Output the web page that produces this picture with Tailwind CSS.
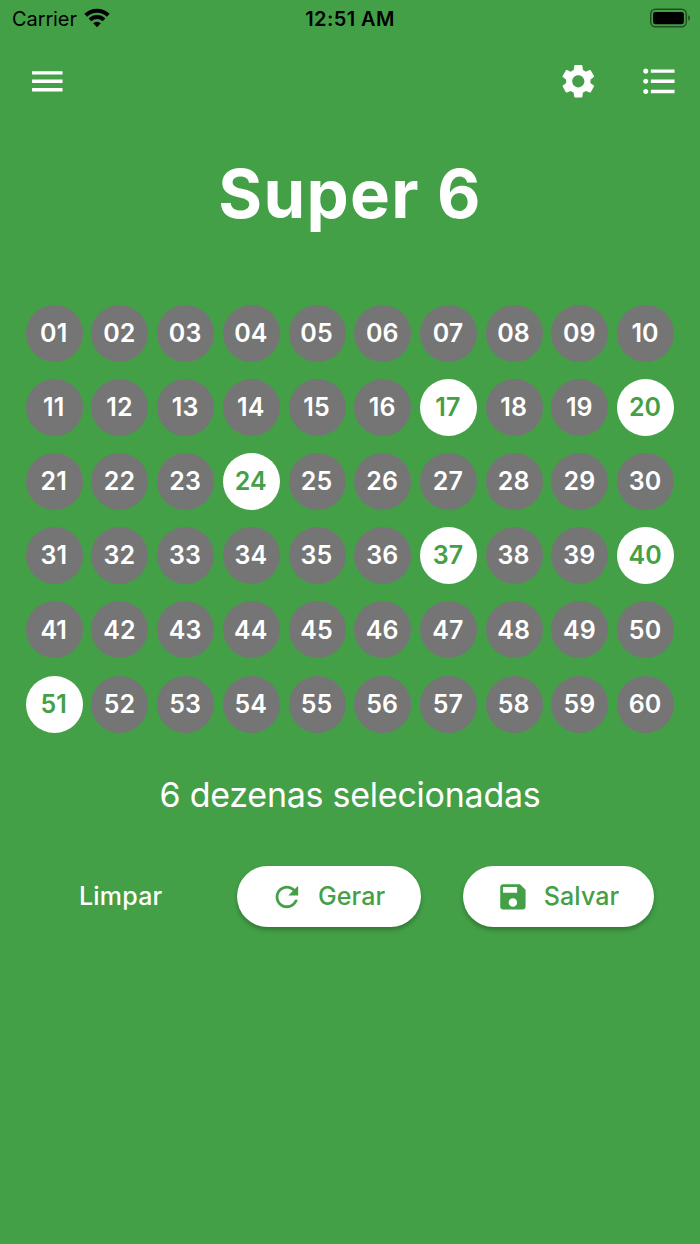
<!DOCTYPE html>
<html lang="pt-BR">
  <head>
    <meta charset="UTF-8" />
    <meta name="viewport" content="width=device-width, initial-scale=1.0" />
    <title>Super 6</title>
    <script src="https://cdn.jsdelivr.net/npm/@tailwindcss/browser@4"></script>
  </head>
  <body
    class="bg-[#43a047] font-['Inter','Roboto',sans-serif] text-white w-[700px] h-[1244px] overflow-hidden"
  >
    <!-- Status bar -->
    <div
      class="grid grid-cols-3 items-center h-[34px] pl-[12px] pr-[9px] text-black"
    >
      <div class="flex items-center gap-[7px]">
        <span id="carrier" class="text-[20px] leading-[34px] tracking-[-0.1px] pt-[2px]">Carrier</span>
        <svg class="w-[26px] h-[20px] mb-[1px]" viewBox="0 0 26 20" fill="none">
          <path d="M1.7 7.2a16.3 16.3 0 0 1 22.6 0" stroke="currentColor" stroke-width="4" />
          <path d="M6 11.9a10 10 0 0 1 14 0" stroke="currentColor" stroke-width="3.9" />
          <path d="M13 19.2l-3.8-3.9a5.3 5.3 0 0 1 7.6 0z" fill="currentColor" />
        </svg>
      </div>
      <div class="text-center pr-[3px] pt-[2px]">
        <span id="time" class="text-[20px] leading-[34px] font-semibold tracking-[0.4px]">12:51 AM</span>
      </div>
      <div class="flex justify-end">
        <svg class="w-[42px] h-[20px] mb-[1px]" viewBox="0 0 42 20">
          <rect x="1.7" y="1.2" width="35.6" height="17.6" rx="4.8" fill="none" stroke="#000" stroke-opacity="0.5" stroke-width="1.5" />
          <rect x="4.1" y="3.9" width="30.8" height="12.4" rx="2.2" fill="#000" />
          <path d="M39.2 7.3c2.4.9 2.4 4.5 0 5.4z" fill="#000" fill-opacity="0.5" />
        </svg>
      </div>
    </div>

    <!-- App bar -->
    <header class="flex items-center h-[95px] pl-[27px] pr-[20.5px]">
      <svg class="w-[40.6px] h-[40.6px]" viewBox="0 0 24 24" fill="currentColor">
        <path d="M3 18h18v-2H3v2zm0-5h18v-2H3v2zm0-7v2h18V6H3z" />
      </svg>
      <div class="flex gap-[40.6px] ml-auto">
        <svg class="w-[40.6px] h-[40.6px]" viewBox="0 0 24 24" fill="currentColor">
          <path
            d="M19.14 12.94c.04-.3.06-.61.06-.94 0-.32-.02-.64-.07-.94l2.03-1.58c.18-.14.23-.41.12-.61l-1.92-3.32c-.12-.22-.37-.29-.59-.22l-2.39.96c-.5-.38-1.03-.7-1.62-.94l-.36-2.54c-.04-.24-.24-.41-.48-.41h-3.84c-.24 0-.43.17-.47.41l-.36 2.54c-.59.24-1.13.57-1.62.94l-2.39-.96c-.22-.08-.47 0-.59.22L2.74 8.87c-.12.21-.08.47.12.61l2.03 1.58c-.05.3-.09.63-.09.94s.02.64.07.94l-2.03 1.58c-.18.14-.23.41-.12.61l1.92 3.32c.12.22.37.29.59.22l2.39-.96c.5.38 1.03.7 1.62.94l.36 2.54c.05.24.24.41.48.41h3.84c.24 0 .44-.17.47-.41l.36-2.54c.59-.24 1.13-.56 1.62-.94l2.39.96c.22.08.47 0 .59-.22l1.92-3.32c.12-.22.07-.47-.12-.61l-2.01-1.58zM12 15.6c-1.98 0-3.6-1.62-3.6-3.6s1.62-3.6 3.6-3.6 3.6 1.62 3.6 3.6-1.62 3.6-3.6 3.6z"
          />
        </svg>
        <svg class="w-[40.6px] h-[40.6px]" viewBox="0 0 24 24" fill="currentColor">
          <path
            d="M4 10.5c-.83 0-1.5.67-1.5 1.5s.67 1.5 1.5 1.5 1.5-.67 1.5-1.5-.67-1.5-1.5-1.5zm0-6c-.83 0-1.5.67-1.5 1.5S3.17 7.5 4 7.5 5.5 6.83 5.5 6 4.83 4.5 4 4.5zm0 12c-.83 0-1.5.68-1.5 1.5s.68 1.5 1.5 1.5 1.5-.68 1.5-1.5-.67-1.5-1.5-1.5zM7 19h14v-2H7v2zm0-6h14v-2H7v2zm0-8v2h14V5H7z"
          />
        </svg>
      </div>
    </header>

    <main>
      <h1 class="mt-[24px] text-center text-[67px] leading-[82px] font-bold tracking-[1.3px]">
        Super 6
      </h1>

      <!-- Number board -->
      <div id="board" class="grid grid-cols-10 mt-[61px] pl-[21.4px] pr-[21.6px]"></div>

      <p class="mt-[33px] text-center text-[34px] leading-[42px] tracking-[-0.25px]">
        6 dezenas selecionadas
      </p>

      <!-- Actions -->
      <div class="flex items-center mt-[50px] pl-[79px] text-[25px] font-medium">
        <button class="w-[84px] h-[61px] pt-[1px] text-left tracking-[0.2px] whitespace-nowrap">Limpar</button>
        <button
          class="flex items-center w-[184px] h-[61px] ml-[74px] pl-[33.2px] rounded-full bg-white text-[#43a047] tracking-[0.1px] shadow-[0_3px_4px_rgba(0,0,0,0.25)]"
        >
          <svg class="w-[33.8px] h-[33.8px] mr-[14px]" viewBox="0 0 24 24" fill="currentColor">
            <path
              d="M17.65 6.35C16.2 4.9 14.21 4 12 4c-4.42 0-7.99 3.58-7.99 8s3.57 8 7.99 8c3.73 0 6.84-2.55 7.73-6h-2.08c-.82 2.33-3.04 4-5.65 4-3.31 0-6-2.69-6-6s2.69-6 6-6c1.66 0 3.14.69 4.22 1.78L13 11h7V4l-2.35 2.35z"
            />
          </svg>
          <span class="pt-[1px]">Gerar</span>
        </button>
        <button
          class="flex items-center w-[191px] h-[61px] ml-[41.5px] pl-[33.5px] rounded-full bg-white text-[#43a047] tracking-[0.1px] shadow-[0_3px_4px_rgba(0,0,0,0.25)]"
        >
          <svg class="w-[33.8px] h-[33.8px] mr-[14px]" viewBox="0 0 24 24" fill="currentColor">
            <path
              d="M17 3H5c-1.11 0-2 .9-2 2v14c0 1.1.89 2 2 2h14c1.1 0 2-.9 2-2V7l-4-4zm-5 16c-1.66 0-3-1.34-3-3s1.34-3 3-3 3 1.34 3 3-1.34 3-3 3zm3-10H5V5h10v4z"
            />
          </svg>
          <span class="pt-[1px]">Salvar</span>
        </button>
      </div>
    </main>

    <script>
      const selected = [17, 20, 24, 37, 40, 51];
      const board = document.getElementById("board");

      for (let n = 1; n <= 60; n++) {
        const cell = document.createElement("div");
        cell.className = "flex items-center justify-center h-[74.2px]";

        const ball = document.createElement("button");
        ball.className =
          "flex items-center justify-center w-[57px] h-[57px] pt-[1px] pr-[1px] rounded-full text-[25px] font-semibold tracking-[0.1px] " +
          (selected.includes(n)
            ? "bg-white text-[#43a047]"
            : "bg-[#757575] text-white");
        ball.textContent = String(n).padStart(2, "0");

        cell.appendChild(ball);
        board.appendChild(cell);
      }
    </script>
  </body>
</html>
